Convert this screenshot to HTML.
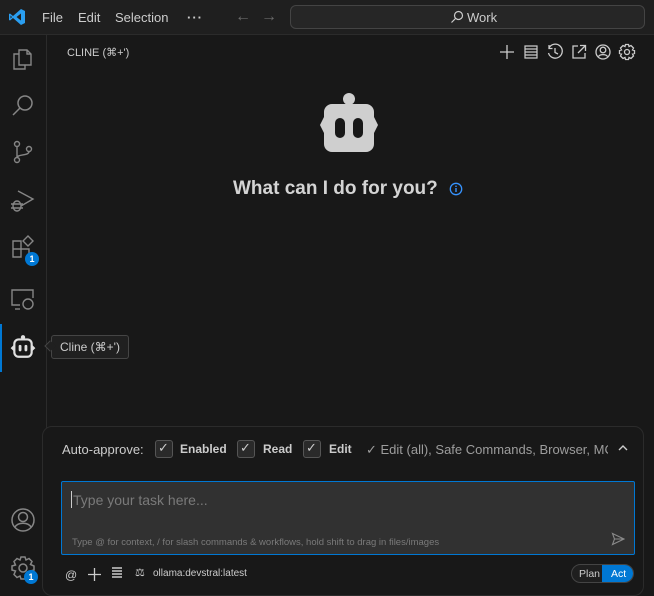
<!DOCTYPE html>
<html><head><meta charset="utf-8"><style>
*{box-sizing:border-box;margin:0;padding:0}
body{width:654px;height:587px;background:#181818;font-family:"Liberation Sans",sans-serif;color:#ccc;position:relative;overflow:hidden;font-size:13px}
.tb{position:absolute;left:0;top:0;width:654px;height:35px;background:#1f1f1f;border-bottom:1px solid #2b2b2b}
.ab{position:absolute;left:0;top:35px;width:47px;height:552px;background:#181818;border-right:1px solid #2b2b2b}
.abs{position:absolute;left:0}
svg{display:block}
.t{position:absolute;white-space:nowrap}
.badge{position:absolute;width:14px;height:14px;border-radius:7px;background:#0078d4;color:#fff;font-size:9px;font-weight:bold;text-align:center;line-height:14px}
.cb{position:absolute;width:18px;height:18px;border:1px solid #555;background:#2a2a2a;border-radius:3px}
</style></head><body>
<div class="tb">
<svg class="abs" style="left:8px;top:8px" width="18" height="18" viewBox="0 0 18 18"><path d="M13 1 L17 3 V15 L13 17 L5 10 L2 12.5 L1 12 V6 L2 5.5 L5 8 Z M13 5.5 L8.5 9 L13 12.5 Z M2.5 7.5 V10.5 L4 9 Z" fill="#2a9ef0"/></svg>
<span class="t" style="left:42px;top:10px;color:#ccc">File</span>
<span class="t" style="left:78px;top:10px">Edit</span>
<span class="t" style="left:115px;top:10px">Selection</span>
<span class="t" style="left:187px;top:10px;letter-spacing:1px;font-weight:bold">···</span>
<span class="t" style="left:235px;top:8px;color:#6a6a6a;font-size:16px">←</span>
<span class="t" style="left:261px;top:8px;color:#6a6a6a;font-size:16px">→</span>
<div style="position:absolute;left:290px;top:5px;width:355px;height:24px;border:1px solid #444;border-radius:6px;background:#262626"></div>
<svg class="abs" style="left:450px;top:10px" width="14" height="14" viewBox="0 0 14 14"><circle cx="8.5" cy="5.5" r="4" fill="none" stroke="#ccc" stroke-width="1.2"/><path d="M5.5 8.5 L1.5 12.5" stroke="#ccc" stroke-width="1.2"/></svg>
<span class="t" style="left:467px;top:10px">Work</span>
</div>
<div class="ab">
<div style="position:absolute;left:0;top:289px;width:2px;height:48px;background:#0078d4"></div>
<svg class="abs" style="left:11px;top:11px" width="24" height="24" viewBox="0 0 24 24" fill="none" stroke="#868686" stroke-width="1.4"><path d="M8 4 H16 L20 8 V19 H8 Z M16 4 V8 H20"/><path d="M8 8 H3 V23 H14 V19"/></svg>
<svg class="abs" style="left:11px;top:58px" width="24" height="24" viewBox="0 0 24 24" fill="none" stroke="#868686" stroke-width="1.5"><circle cx="14" cy="10" r="7"/><path d="M9 15 L2 22"/></svg>
<svg class="abs" style="left:11px;top:105px" width="24" height="24" viewBox="0 0 24 24" fill="none" stroke="#868686" stroke-width="1.4"><circle cx="6" cy="4" r="2.5"/><circle cx="6" cy="20" r="2.5"/><circle cx="18" cy="9" r="2.5"/><path d="M6 6.5 V17.5 M18 11.5 C18 16 7 14 6 17.5"/></svg>
<svg class="abs" style="left:9px;top:152px" width="26" height="26" viewBox="0 0 26 26" fill="none" stroke="#868686" stroke-width="1.4"><path d="M9 4 L24 12 L12 19"/><ellipse cx="8" cy="19" rx="4" ry="5"/><path d="M2 17 H14 M2 21 H14"/></svg>
<svg class="abs" style="left:11px;top:200px" width="24" height="24" viewBox="0 0 24 24" fill="none" stroke="#868686" stroke-width="1.4"><path d="M2 6 H10 V14 H2 Z M2 14 H10 V22 H2 Z M10 14 H18 V22"/><path d="M17 1 L22 6 L17 11 L12 6 Z"/></svg>
<div class="badge" style="left:25px;top:217px">1</div>
<svg class="abs" style="left:10px;top:252px" width="26" height="24" viewBox="0 0 26 24" fill="none" stroke="#868686" stroke-width="1.4"><path d="M10 18 H2 V3 H23 V11"/><path d="M5 22 H10"/><circle cx="18" cy="17" r="5"/></svg>
<svg class="abs" style="left:10px;top:299px" width="26" height="26" viewBox="0 0 24 24"><circle cx="12" cy="3" r="2" fill="#e0e0e0"/><rect x="4" y="5" width="16" height="16" rx="4" fill="none" stroke="#e0e0e0" stroke-width="2"/><path d="M4 11 L2 13 L4 15 M20 11 L22 13 L20 15" fill="none" stroke="#e0e0e0" stroke-width="2"/><rect x="8" y="10" width="2.6" height="6" rx="1.3" fill="#e0e0e0"/><rect x="13.4" y="10" width="2.6" height="6" rx="1.3" fill="#e0e0e0"/></svg>
<svg class="abs" style="left:10px;top:472px" width="26" height="26" viewBox="0 0 26 26" fill="none" stroke="#868686" stroke-width="1.5"><circle cx="13" cy="13" r="11"/><circle cx="13" cy="10" r="4.5"/><path d="M5 20 C8 15 18 15 21 20"/></svg>
<svg class="abs" style="left:10px;top:520px" width="26" height="26" viewBox="0 0 26 26" fill="none" stroke="#868686" stroke-width="1.5"><circle cx="13" cy="13" r="4"/><path d="M11 2 H15 L16 5 L19 3.5 L22 6.5 L20.5 9.5 L24 11 V15 L20.5 16 L22 19.5 L19 22.5 L16 21 L15 24 H11 L10 21 L7 22.5 L4 19.5 L5.5 16 L2 15 V11 L5.5 10 L4 6.5 L7 3.5 L10 5 Z"/></svg>
<div class="badge" style="left:24px;top:535px">1</div>
</div>
<span class="t" style="left:67px;top:46px;font-size:11px;color:#ccc">CLINE (⌘+')</span>
<div style="position:absolute;left:498px;top:43px;display:flex;gap:6px">
<svg width="18" height="18" viewBox="0 0 18 18" stroke="#ccc" stroke-width="1.3" fill="none"><path d="M9 2 V16 M2 9 H16"/></svg>
<svg width="18" height="18" viewBox="0 0 18 18" stroke="#ccc" stroke-width="1.2" fill="none"><path d="M3 3 H15 V15 H3 Z M3 6 H15 M3 9 H15 M3 12 H15"/></svg>
<svg width="18" height="18" viewBox="0 0 18 18" stroke="#ccc" stroke-width="1.3" fill="none"><path d="M3 5 A7 7 0 1 1 2.5 10 M3 2 V5.5 H6.5 M9 5 V9.5 L12 11"/></svg>
<svg width="18" height="18" viewBox="0 0 18 18" stroke="#ccc" stroke-width="1.3" fill="none"><path d="M8 3 H3 V15 H15 V10 M10 2.5 H15.5 V8 M15.5 2.5 L8 10"/></svg>
<svg width="18" height="18" viewBox="0 0 18 18" stroke="#ccc" stroke-width="1.3" fill="none"><circle cx="9" cy="9" r="7"/><circle cx="9" cy="7" r="2.8"/><path d="M4.5 13.5 C6 11 12 11 13.5 13.5"/></svg>
<svg width="18" height="18" viewBox="0 0 18 18" stroke="#ccc" stroke-width="1.3" fill="none"><circle cx="9" cy="9" r="2.5"/><path d="M7.5 1.5 H10.5 L11 3.5 L13 2.5 L15.5 5 L14.5 7 L16.5 7.5 V10.5 L14.5 11 L15.5 13 L13 15.5 L11 14.5 L10.5 16.5 H7.5 L7 14.5 L5 15.5 L2.5 13 L3.5 11 L1.5 10.5 V7.5 L3.5 7 L2.5 5 L5 2.5 L7 3.5 Z"/></svg>
</div>
<svg class="abs" style="left:318px;top:92px" width="62" height="62" viewBox="0 0 62 62"><circle cx="31" cy="7" r="6" fill="#cfcfcf"/><path d="M14 12 H48 A8 8 0 0 1 56 20 V25 L60 33 L56 41 V52 A8 8 0 0 1 48 60 H14 A8 8 0 0 1 6 52 V41 L2 33 L6 25 V20 A8 8 0 0 1 14 12 Z" fill="#cfcfcf"/><rect x="17" y="26" width="10" height="20" rx="5" fill="#181818"/><rect x="35" y="26" width="10" height="20" rx="5" fill="#181818"/></svg>
<span class="t" style="left:233px;top:178px;font-size:19px;font-weight:bold;color:#d4d4d4">What can I do for you?</span>
<svg class="abs" style="left:449px;top:182px" width="14" height="14" viewBox="0 0 14 14"><circle cx="7" cy="7" r="5.7" fill="none" stroke="#3794ff" stroke-width="1.3"/><rect x="6.3" y="6" width="1.4" height="4" fill="#3794ff"/><rect x="6.3" y="3.6" width="1.4" height="1.4" fill="#3794ff"/></svg>
<div style="position:absolute;left:51px;top:335px;width:78px;height:24px;background:#202020;border:1px solid #454545;border-radius:3px;font-size:12px;padding:4px 0 0 8px;color:#ccc">Cline (⌘+')</div>
<div style="position:absolute;left:46px;top:342px;width:8px;height:8px;background:#202020;border-left:1px solid #454545;border-bottom:1px solid #454545;transform:rotate(45deg)"></div>
<div style="position:absolute;left:42px;top:426px;width:602px;height:170px;border:1px solid #2b2b2b;border-radius:10px;background:#181818"></div>
<span class="t" style="left:62px;top:442px;color:#ccc">Auto-approve:</span>
<div class="cb" style="left:155px;top:440px"></div><span class="t" style="left:158px;top:440px;color:#ccc">✓</span>
<span class="t" style="left:180px;top:442px;font-weight:bold;font-size:12px">Enabled</span>
<div class="cb" style="left:237px;top:440px"></div><span class="t" style="left:240px;top:440px">✓</span>
<span class="t" style="left:263px;top:442px;font-weight:bold;font-size:12px">Read</span>
<div class="cb" style="left:303px;top:440px"></div><span class="t" style="left:306px;top:440px">✓</span>
<span class="t" style="left:329px;top:442px;font-weight:bold;font-size:12px">Edit</span>
<div style="position:absolute;left:366px;top:438px;width:242px;height:22px;overflow:hidden"><span class="t" style="left:0;top:4px;color:#9d9d9d">✓ Edit (all), Safe Commands, Browser, MCP</span></div>
<svg class="abs" style="left:617px;top:443px" width="12" height="10" viewBox="0 0 12 10"><path d="M2 7 L6 3 L10 7" stroke="#ccc" stroke-width="1.4" fill="none"/></svg>
<div style="position:absolute;left:61px;top:481px;width:574px;height:74px;border:1px solid #0078d4;border-radius:2px;background:#313131"></div>
<div style="position:absolute;left:71px;top:491px;width:1px;height:17px;background:#ccc"></div>
<span class="t" style="left:73px;top:492px;color:#7a7a7a;font-size:14px">Type your task here...</span>
<span class="t" style="left:72px;top:537px;color:#7a7a7a;font-size:9.5px">Type @ for context, / for slash commands &amp; workflows, hold shift to drag in files/images</span>
<svg class="abs" style="left:611px;top:532px" width="14" height="14" viewBox="0 0 14 14"><path d="M1.5 1.5 L13 7 L1.5 12.5 L3.5 7 Z M3.5 7 H13" stroke="#8a8a8a" stroke-width="1.1" fill="none"/></svg>
<span class="t" style="left:65px;top:568px;font-size:12px">@</span>
<svg class="abs" style="left:88px;top:568px" width="13" height="13" viewBox="0 0 13 13"><path d="M6.5 0 V13 M0 6.5 H13" stroke="#ccc" stroke-width="1.3"/></svg>
<svg class="abs" style="left:112px;top:567px" width="10" height="12" viewBox="0 0 10 12"><path d="M0 1 H10 M0 4 H10 M0 7 H10 M0 10 H10" stroke="#ccc" stroke-width="1.5"/></svg>
<span class="t" style="left:135px;top:566px;font-size:11px">⚖</span>
<span class="t" style="left:153px;top:568px;font-size:10px;color:#ccc">ollama:devstral:latest</span>
<div style="position:absolute;left:571px;top:564px;width:63px;height:19px;border:1px solid #444;border-radius:10px;background:#1f1f1f;overflow:hidden">
<div style="position:absolute;left:30px;top:0;width:33px;height:19px;background:#0078d4"></div>
<span class="t" style="left:7px;top:3px;font-size:10.5px;color:#ccc">Plan</span>
<span class="t" style="left:39px;top:3px;font-size:10.5px;color:#fff">Act</span>
</div>
</body></html>
